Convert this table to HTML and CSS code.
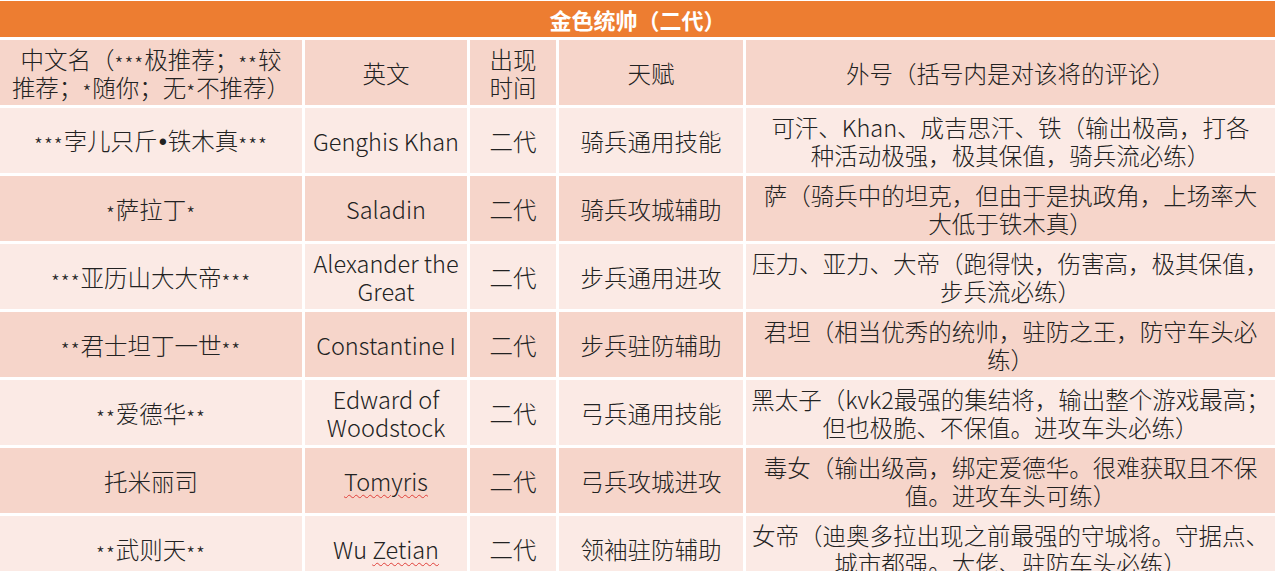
FILE: index.html
```html
<!DOCTYPE html>
<html lang="zh-CN">
<head>
<meta charset="utf-8">
<title>金色统帅（二代）</title>
<link rel="stylesheet" href="styles.css">
</head>
<body>
<div class="sheet">
  <div class="title">金色统帅（二代）</div>

  <div class="cell dark"><span>中文名（<span class="star">***</span>极推荐；<span class="star">**</span>较<br>推荐；<span class="star">*</span>随你；无<span class="star">*</span>不推荐）</span></div>
  <div class="cell dark">英文</div>
  <div class="cell dark">出现<br>时间</div>
  <div class="cell dark">天赋</div>
  <div class="cell dark">外号（括号内是对该将的评论）</div>

  <div class="cell light"><span><span class="star">***</span>孛儿只斤<span class="dot">•</span>铁木真<span class="star">***</span></span></div>
  <div class="cell light">Genghis Khan</div>
  <div class="cell light">二代</div>
  <div class="cell light">骑兵通用技能</div>
  <div class="cell light">可汗、Khan、成吉思汗、铁（输出极高，打各<br>种活动极强，极其保值，骑兵流必练）</div>

  <div class="cell dark"><span><span class="star">*</span>萨拉丁<span class="star">*</span></span></div>
  <div class="cell dark">Saladin</div>
  <div class="cell dark">二代</div>
  <div class="cell dark">骑兵攻城辅助</div>
  <div class="cell dark">萨（骑兵中的坦克，但由于是执政角，上场率大<br>大低于铁木真）</div>

  <div class="cell light"><span><span class="star">***</span>亚历山大大帝<span class="star">***</span></span></div>
  <div class="cell light">Alexander the<br>Great</div>
  <div class="cell light">二代</div>
  <div class="cell light">步兵通用进攻</div>
  <div class="cell light">压力、亚力、大帝（跑得快，伤害高，极其保值，<br>步兵流必练）</div>

  <div class="cell dark"><span><span class="star">**</span>君士坦丁一世<span class="star">**</span></span></div>
  <div class="cell dark">Constantine I</div>
  <div class="cell dark">二代</div>
  <div class="cell dark">步兵驻防辅助</div>
  <div class="cell dark">君坦（相当优秀的统帅，驻防之王，防守车头必<br>练）</div>

  <div class="cell light"><span><span class="star">**</span>爱德华<span class="star">**</span></span></div>
  <div class="cell light">Edward of<br>Woodstock</div>
  <div class="cell light">二代</div>
  <div class="cell light">弓兵通用技能</div>
  <div class="cell light">黑太子（kvk2最强的集结将，输出整个游戏最高；<br>但也极脆、不保值。进攻车头必练）</div>

  <div class="cell dark">托米丽司</div>
  <div class="cell dark"><span class="spell">Tomyris</span></div>
  <div class="cell dark">二代</div>
  <div class="cell dark">弓兵攻城进攻</div>
  <div class="cell dark">毒女（输出级高，绑定爱德华。很难获取且不保<br>值。进攻车头可练）</div>

  <div class="cell light"><span><span class="star">**</span>武则天<span class="star">**</span></span></div>
  <div class="cell light"><span>Wu <span class="spell">Zetian</span></span></div>
  <div class="cell light">二代</div>
  <div class="cell light">领袖驻防辅助</div>
  <div class="cell light">女帝（迪奥多拉出现之前最强的守城将。守据点、<br>城市都强。大佬、驻防车头必练）</div>
</div>
</body>
</html>
```

FILE: styles.css
```css
html, body {
  margin: 0;
  padding: 0;
  background: #ffffff;
  overflow: hidden;
  height: 571px;
}

body {
  font-family: "Noto Sans CJK SC", "Noto Sans", sans-serif;
  color: #222222;
}

.sheet {
  display: grid;
  grid-template-columns: 302px 162px 86px 184px 1fr;
  grid-auto-rows: 65px;
  grid-template-rows: 36px;
  gap: 3px;
  padding-top: 1px;
  background: #ffffff;
}

.title {
  grid-column: 1 / -1;
  background: #ed7d31;
  color: #ffffff;
  font-weight: 700;
  font-size: 22px;
  display: flex;
  align-items: center;
  justify-content: center;
  line-height: 1;
}

.cell {
  display: flex;
  align-items: center;
  justify-content: center;
  text-align: center;
  font-size: 23.5px;
  font-weight: 300;
  line-height: 28px;
  white-space: nowrap;
  overflow: hidden;
}

.star {
  font-size: 20px;
  letter-spacing: 1px;
  line-height: 0;
  vertical-align: -3px;
}

.dot {
  font-family: "Liberation Sans", sans-serif;
  padding: 0 1px;
}

.dark {
  background: #f6d5ca;
}

.light {
  background: #fbeae5;
}

.spell {
  text-decoration: underline wavy #e0403a;
  text-decoration-thickness: 1px;
  text-underline-offset: 3px;
}
```
